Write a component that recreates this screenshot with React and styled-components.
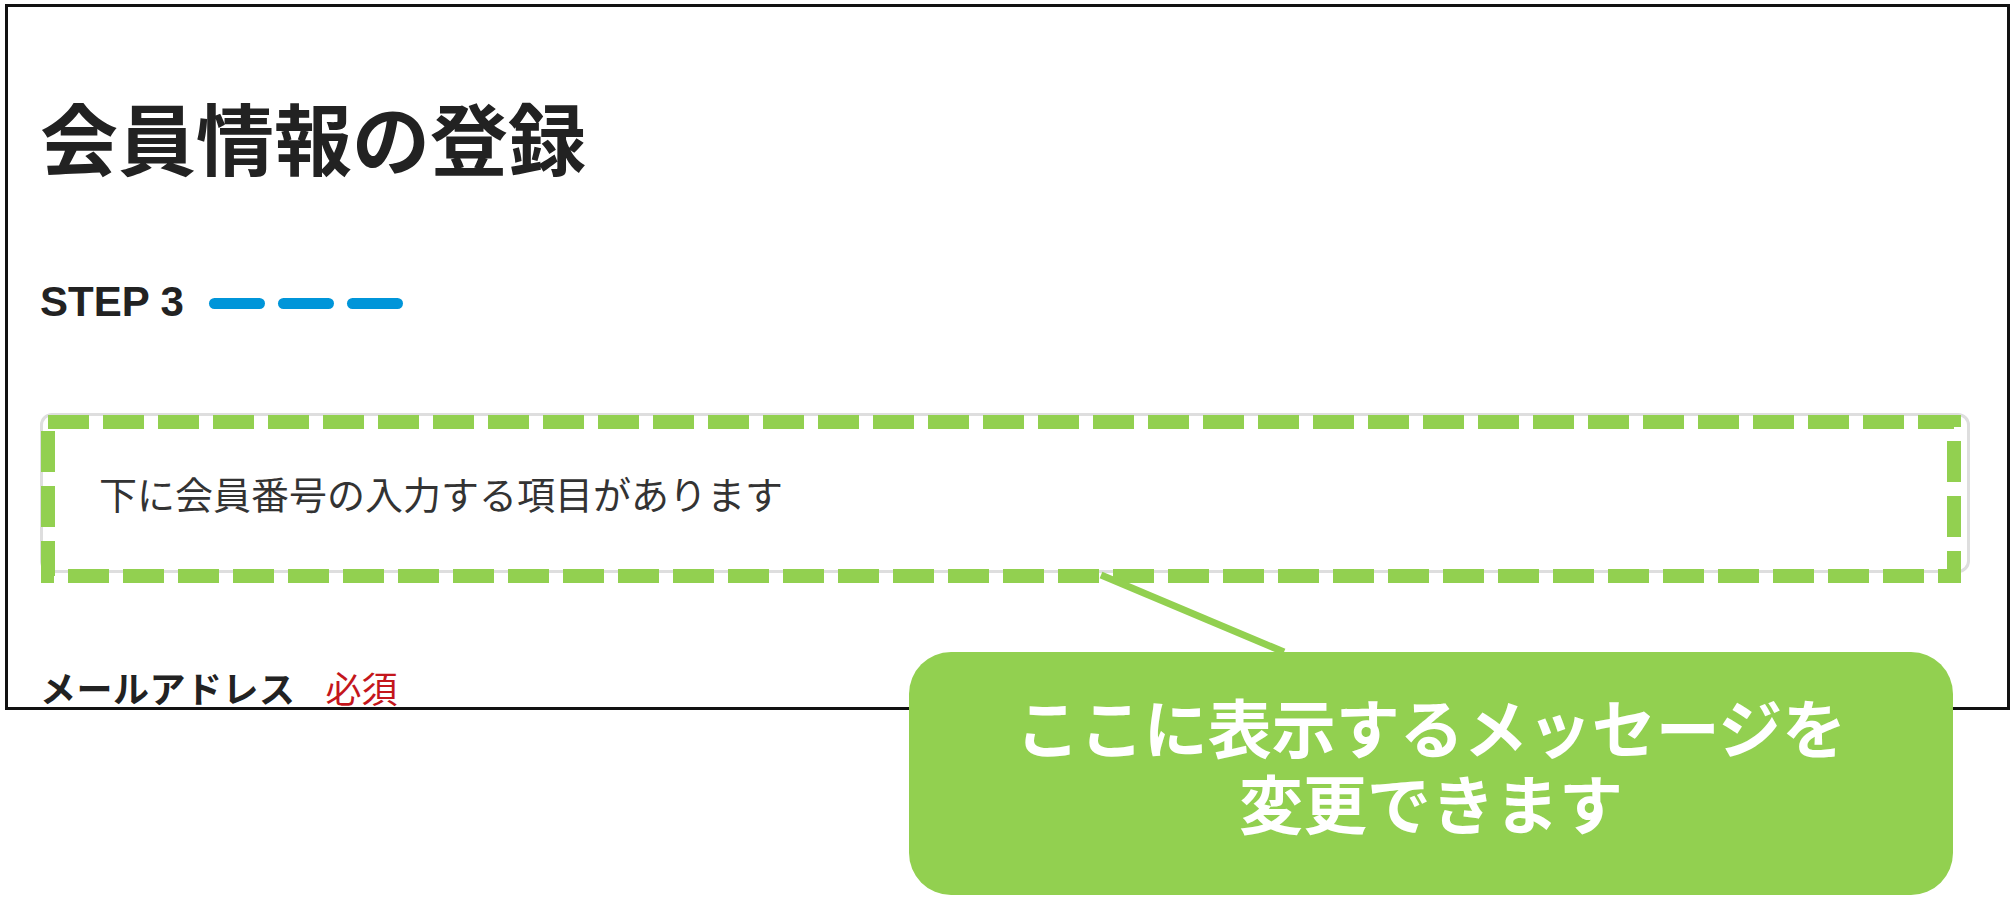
import React from "react";
import styled, { createGlobalStyle } from "styled-components";

const GlobalStyle = createGlobalStyle`
  html, body {
    margin: 0;
    padding: 0;
    background: #fff;
  }
  body {
    font-family: "Noto Sans CJK JP", "Noto Sans", sans-serif;
    color: #222;
  }
`;

const GREEN = "#92d050";

function App() {
  return (
    <Page>
      <GlobalStyle />
      <Frame>
        <Title>会員情報の登録</Title>

        <StepRow>
          <StepLabel>STEP 3</StepLabel>
          <Dashes>
            <Dash />
            <Dash />
            <Dash />
          </Dashes>
        </StepRow>

        <MessageBox>下に会員番号の入力する項目があります</MessageBox>

        <FieldLabel>
          メールアドレス<Required>必須</Required>
        </FieldLabel>
      </Frame>

      <Overlay width="2016" height="898" viewBox="0 0 2016 898">
        <rect
          x="48"
          y="422"
          width="1906"
          height="154"
          fill="none"
          stroke={GREEN}
          strokeWidth="14"
          strokeDasharray="41 14"
        />
        <line
          x1="1101"
          y1="575"
          x2="1284"
          y2="652"
          stroke={GREEN}
          strokeWidth="7"
        />
      </Overlay>

      <Callout>
        ここに表示するメッセージを
        <br />
        変更できます
      </Callout>
    </Page>
  );
}

export default App;

const Page = styled.div`
  position: relative;
  width: 2016px;
  height: 898px;
  padding: 4px 0 0 5px;
  box-sizing: border-box;
  overflow: hidden;
`;

const Frame = styled.div`
  width: 2005px;
  height: 706px;
  box-sizing: border-box;
  border: 3px solid #111;
  padding: 0 37px 0 32px;
  overflow: hidden;
  display: flex;
  flex-direction: column;
  align-items: stretch;
`;

const Title = styled.h1`
  margin: 90px 0 0;
  font-size: 78px;
  line-height: 1;
  font-weight: 700;
  color: #222;
`;

const StepRow = styled.div`
  display: flex;
  align-items: center;
  gap: 25px;
  margin-top: 107px;
  height: 40px;
`;

const StepLabel = styled.span`
  font-family: "Liberation Sans", Arial, sans-serif;
  font-size: 42px;
  line-height: 1;
  font-weight: 700;
  color: #222;
`;

const Dashes = styled.div`
  display: flex;
  gap: 13px;
  margin-top: 2px;
`;

const Dash = styled.span`
  display: block;
  width: 56px;
  height: 11px;
  border-radius: 6px;
  background: #0095d9;
`;

const MessageBox = styled.div`
  margin-top: 91px;
  border: 3px solid #dedede;
  border-radius: 12px;
  padding: 58px 56px;
  font-size: 38px;
  line-height: 38px;
  color: #333;
`;

const FieldLabel = styled.div`
  margin-top: 96px;
  font-size: 36px;
  line-height: 1;
  font-weight: 700;
  color: #222;
  white-space: nowrap;
  letter-spacing: 0.5px;
`;

const Required = styled.span`
  margin-left: 30px;
  font-weight: 400;
  letter-spacing: 0;
  color: #c4161c;
`;

const Overlay = styled.svg`
  position: absolute;
  left: 0;
  top: 0;
  pointer-events: none;
`;

const Callout = styled.div`
  position: absolute;
  left: 909px;
  top: 652px;
  width: 1044px;
  height: 243px;
  box-sizing: border-box;
  padding-top: 35px;
  border-radius: 42px;
  background: ${GREEN};
  color: #fff;
  font-size: 64px;
  line-height: 76px;
  font-weight: 700;
  text-align: center;
`;
